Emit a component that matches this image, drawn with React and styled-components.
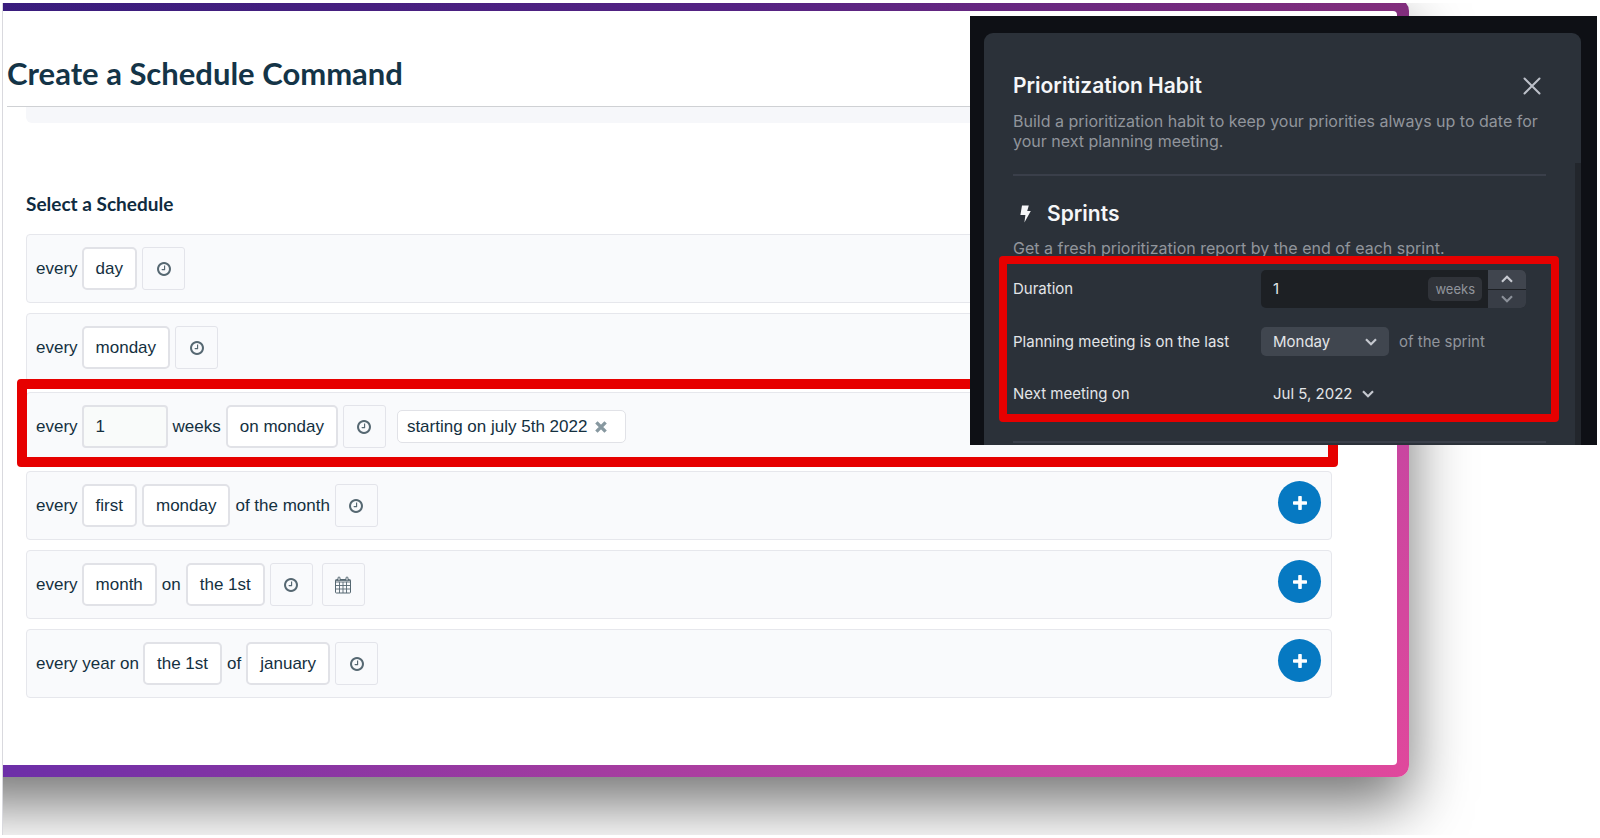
import React from "react";
import styled, { createGlobalStyle } from "styled-components";

const GlobalStyle = createGlobalStyle`
  * {
    box-sizing: border-box;
  }
  body {
    margin: 0;
    background: #ffffff;
  }
  h1, h2, h3, p {
    margin: 0;
  }
  button, input, select {
    font: inherit;
    color: inherit;
    margin: 0;
  }
  button {
    cursor: pointer;
  }
`;
const Stage = styled.div`
  position: relative;
  margin: 3px 3px 3px 2px;
  padding: 0 188px 58px 0;
  border-left: 1px solid #d9d9de;
  overflow: hidden;
`;
const Frame = styled.div`
  margin: -4px 0 0 -60px;
  padding: 12px;
  border-radius: 12px;
  background:
    linear-gradient(rgba(20, 0, 20, 0.25) 12px, transparent 50%),
    linear-gradient(135deg, #4526a0 3%, #6a2ea8 36%, #a03ba0 62%, #c946a0 85%, #e0489c);
  box-shadow: 0 27px 60px rgba(0, 0, 0, 0.55);
`;
const Page = styled.main`
  padding: 42px 0 67px 52px;
  border-radius: 4px;
  background: #ffffff;
  font-family: "Liberation Sans", Arial, sans-serif;
  font-size: 17px;
  line-height: 20px;
  color: #14303f;
`;
const Title = styled.h1`
  padding-bottom: 13px;
  border-bottom: 1px solid #cfd1d4;
  font-family: Lato, sans-serif;
  font-size: 31px;
  font-weight: 700;
  line-height: 40px;
  color: #143447;
`;
const Content = styled.div`
  padding: 0 65px 0 19px;
`;
const Strip = styled.div`
  height: 16px;
  border-radius: 0 0 6px 6px;
  background: #f6f7fa;
`;
const Subtitle = styled.h2`
  margin: 69px 0 18px;
  font-family: Lato, sans-serif;
  font-size: 19px;
  font-weight: 700;
  line-height: 24px;
  color: #0f2b40;
`;
const Rows = styled.div`
  display: flex;
  flex-direction: column;
  gap: 10px;
`;
const Row = styled.div`
  position: relative;
  display: flex;
  justify-content: space-between;
  align-items: flex-start;
  padding: 9px 10px 9px 9px;
  border: 1px solid #e6e7ec;
  border-radius: 4px;
  background: #f9fafc;
  &:after {
    content: "";
    display: ${(prop) => (prop.$marked ? "block" : "none")};
    position: absolute;
    inset: -14px -7px -7px -10px;
    border: 10px solid #e60000;
    border-radius: 4px;
    pointer-events: none;
  }
`;
const Parts = styled.div`
  display: flex;
  align-items: center;
  gap: 5px;
  padding: 3px 0;
  & > span:first-child {
    margin-right: -1px;
  }
`;
const Choice = styled.button`
  height: 43px;
  padding: 0 12px;
  border: 2px solid #e1e2e7;
  border-radius: 5px;
  background: #ffffff;
`;
const Count = styled.input`
  width: 86px;
  height: 43px;
  padding: 0 12px;
  border: 2px solid #e1e2e7;
  border-radius: 4px;
  background: #f9fbfa;
`;
const IconButton = styled.button`
  display: flex;
  align-items: center;
  justify-content: center;
  width: 43px;
  height: 43px;
  padding: 0;
  border: 1px solid #e3e4ea;
  border-radius: 3px;
  background: #f9fafc;
  color: #566872;
  & + & {
    margin-left: 4px;
  }
`;
const Tag = styled.span`
  display: flex;
  align-items: center;
  gap: 8px;
  height: 33px;
  margin-left: 6px;
  padding: 0 18px 0 9px;
  border: 1px solid #e1e2e7;
  border-radius: 5px;
  background: #ffffff;
`;
const Remove = styled.button`
  display: flex;
  padding: 0;
  border: 0;
  background: none;
  color: #8798a0;
`;
const Add = styled.button`
  display: flex;
  align-items: center;
  justify-content: center;
  width: 43px;
  height: 43px;
  padding: 0;
  border: 0;
  border-radius: 50%;
  background: #0679c2;
  color: #ffffff;
`;

const Backdrop = styled.aside`
  position: absolute;
  top: 13px;
  right: 0;
  width: 627px;
  height: 429px;
  padding: 17px 16px 0 14px;
  overflow: hidden;
  background: #0e1015;
  font-family: Inter, sans-serif;
  font-size: 15px;
  line-height: 20px;
  color: #e3e5e8;
`;
const Modal = styled.section`
  position: relative;
  height: 420px;
  padding: 39px 35px 0 29px;
  border-radius: 9px;
  background: #2b3139;
  &:after {
    content: "";
    position: absolute;
    top: 130px;
    right: 0;
    bottom: 0;
    width: 6px;
    background: #22262c;
  }
`;
const ModalHead = styled.div`
  display: flex;
  align-items: center;
  justify-content: space-between;
  padding-right: 5px;
`;
const ModalTitle = styled.h2`
  font-size: 21px;
  font-weight: 600;
  line-height: 28px;
  color: #f5f6f8;
`;
const Close = styled.button`
  display: flex;
  padding: 0;
  border: 0;
  background: none;
  color: #bcc0c9;
`;
const Muted = styled.p`
  color: #91959c;
`;
const Description = styled(Muted)`
  font-size: 16px;
`;
const Intro = styled(Description)`
  margin-top: 11px;
`;
const Divider = styled.hr`
  height: 2px;
  margin: 23px 0 0;
  border: 0;
  background: #3a3f4a;
`;
const SectionTitle = styled.h3`
  display: flex;
  align-items: center;
  gap: 16px;
  margin: 24px 0 10px;
  padding-left: 7px;
  font-size: 21px;
  font-weight: 600;
  line-height: 28px;
  color: #f5f6f8;
`;
const Settings = styled.div`
  position: relative;
  display: grid;
  grid-template-columns: 248px 1fr;
  grid-template-rows: 38px 29px 38px;
  row-gap: 19px;
  align-items: center;
  margin: 12px 0 28px;
  &:after {
    content: "";
    position: absolute;
    inset: -14px -13px -9px -14px;
    border: 8px solid #e60000;
    border-radius: 4px;
    pointer-events: none;
  }
`;
const Field = styled.div`
  display: flex;
  align-items: center;
  gap: 10px;
`;
const Stepper = styled.div`
  display: flex;
  width: 265px;
  height: 38px;
  border-radius: 5px;
  overflow: hidden;
  background: #1d2024;
`;
const Duration = styled.input`
  flex: 1;
  min-width: 0;
  padding: 0 12px;
  border: 0;
  background: none;
`;
const Unit = styled.span`
  align-self: center;
  margin-right: 6px;
  padding: 2px 7px;
  border-radius: 5px;
  background: #303339;
  font-size: 13px;
  color: #91959c;
`;
const Steps = styled.div`
  display: grid;
  gap: 1px;
  width: 38px;
`;
const Step = styled.button`
  display: flex;
  align-items: center;
  justify-content: center;
  padding: 0;
  border: 0;
  background: ${(prop) => (prop.$dim ? "#383d46" : "#40454e")};
  color: ${(prop) => (prop.$dim ? "#8a8f98" : "#c5c8cf")};
`;
const SelectBox = styled.div`
  display: grid;
  align-items: center;
  width: 128px;
  & > * {
    grid-area: 1 / 1;
  }
  & svg {
    justify-self: end;
    margin-right: 12px;
    color: #c5c8cf;
    pointer-events: none;
  }
`;
const Select = styled.select`
  appearance: none;
  height: 29px;
  padding: 0 12px;
  border: 0;
  border-radius: 5px;
  background: #40464f;
`;
const DateButton = styled.button`
  display: flex;
  align-items: center;
  gap: 10px;
  padding: 0 12px;
  border: 0;
  background: none;
  & svg {
    color: #c5c8cf;
  }
`;

const Clock = () => (
  <svg width="14" height="14" viewBox="0 128 1536 1536" fill="currentColor">
    <path d="M896 544v448q0 14-9 23t-23 9h-320q-14 0-23-9t-9-23v-64q0-14 9-23t23-9h224v-352q0-14 9-23t23-9h64q14 0 23 9t9 23zm416 352q0-148-73-273t-198-198-273-73-273 73-198 198-73 273 73 273 198 198 273 73 273-73 198-198 73-273zm224 0q0 209-103 385.5t-279.5 279.5-385.5 103-385.5-103-279.5-279.5-103-385.5 103-385.5 279.5-279.5 385.5-103 385.5 103 279.5 279.5 103 385.5z" />
  </svg>
);
const Calendar = () => (
  <svg width="18" height="18" viewBox="0 0 18 18" fill="none" stroke="currentColor">
    <rect x="1.5" y="3.5" width="15" height="13.5" rx="0.8" />
    <path d="M1.5 4.5h15M1.5 6h15M1.5 9.5h15M1.5 13h15M5.5 6v11M9 6v11M12.5 6v11" strokeWidth="0.9" />
    <rect x="4" y="1" width="2" height="4" rx="1" fill="#f9fafc" />
    <rect x="12" y="1" width="2" height="4" rx="1" fill="#f9fafc" />
  </svg>
);
const Cross = () => (
  <svg width="12" height="12" viewBox="0 0 12 12" stroke="currentColor" strokeWidth="3.4">
    <path d="M1.4 1.4l9.2 9.2M10.6 1.4l-9.2 9.2" />
  </svg>
);
const Plus = () => (
  <svg width="14" height="14" viewBox="0 0 14 14" fill="currentColor">
    <rect x="5.2" y="0" width="3.6" height="14" rx="0.8" />
    <rect x="0" y="5.2" width="14" height="3.6" rx="0.8" />
  </svg>
);
const CloseIcon = () => (
  <svg width="18" height="18" viewBox="0 0 18 18" stroke="currentColor" strokeWidth="2" strokeLinecap="round">
    <path d="M1.5 1.5l15 15M16.5 1.5l-15 15" />
  </svg>
);
const Bolt = () => (
  <svg width="11" height="18" viewBox="0 0 11 18" fill="currentColor">
    <path d="M2 0.5h6.8L7.2 6h3.6L4.4 17.5 5.4 10H0.4z" />
  </svg>
);
const Chevron = ({ up }) => (
  <svg width="12" height="8" viewBox="0 0 12 8" fill="none" stroke="currentColor" strokeWidth="2.2">
    <path d={up ? "M1 6.8l5-5 5 5" : "M1 1.2l5 5 5-5"} />
  </svg>
);

const schedules = [
  ["every", { pick: "day" }, { icon: "clock" }],
  ["every", { pick: "monday" }, { icon: "clock" }],
  [
    "every",
    { count: 1 },
    "weeks",
    { pick: "on monday" },
    { icon: "clock" },
    { tag: "starting on july 5th 2022" },
  ],
  ["every", { pick: "first" }, { pick: "monday" }, "of the month", { icon: "clock" }],
  ["every", { pick: "month" }, "on", { pick: "the 1st" }, { icon: "clock" }, { icon: "calendar" }],
  ["every year on", { pick: "the 1st" }, "of", { pick: "january" }, { icon: "clock" }],
];

const Part = ({ part }) => {
  if (typeof part === "string") return <span>{part}</span>;
  if (part.pick) return <Choice type="button">{part.pick}</Choice>;
  if (part.count) return <Count aria-label="number of weeks" defaultValue={part.count} />;
  if (part.tag) {
    return (
      <Tag>
        {part.tag}
        <Remove type="button" aria-label="Remove start date">
          <Cross />
        </Remove>
      </Tag>
    );
  }
  return (
    <IconButton type="button" aria-label={part.icon === "clock" ? "Set time" : "Set date"}>
      {part.icon === "clock" ? <Clock /> : <Calendar />}
    </IconButton>
  );
};

const PrioritizationHabit = () => {
  return (
    <Backdrop>
      <Modal>
        <ModalHead>
          <ModalTitle>Prioritization Habit</ModalTitle>
          <Close type="button" aria-label="Close">
            <CloseIcon />
          </Close>
        </ModalHead>
        <Intro>
          Build a prioritization habit to keep your priorities always up to date for your next
          planning meeting.
        </Intro>
        <Divider />
        <SectionTitle>
          <Bolt />
          Sprints
        </SectionTitle>
        <Description>Get a fresh prioritization report by the end of each sprint.</Description>
        <Settings>
          <label htmlFor="duration">Duration</label>
          <Stepper>
            <Duration id="duration" defaultValue="1" />
            <Unit>weeks</Unit>
            <Steps>
              <Step type="button" aria-label="Increase">
                <Chevron up />
              </Step>
              <Step type="button" aria-label="Decrease" $dim>
                <Chevron />
              </Step>
            </Steps>
          </Stepper>
          <label htmlFor="weekday">Planning meeting is on the last</label>
          <Field>
            <SelectBox>
              <Select id="weekday" defaultValue="Monday">
                <option>Monday</option>
                <option>Tuesday</option>
                <option>Wednesday</option>
                <option>Thursday</option>
                <option>Friday</option>
              </Select>
              <Chevron />
            </SelectBox>
            <Muted>of the sprint</Muted>
          </Field>
          <label htmlFor="next">Next meeting on</label>
          <DateButton id="next" type="button">
            Jul 5, 2022
            <Chevron />
          </DateButton>
        </Settings>
        <Divider />
      </Modal>
    </Backdrop>
  );
};

export default function App() {
  return (
    <>
      <GlobalStyle />
      <Stage>
        <Frame>
          <Page>
            <Title>Create a Schedule Command</Title>
            <Content>
              <Strip />
              <Subtitle>Select a Schedule</Subtitle>
              <Rows>
                {schedules.map((parts, i) => {
                  return (
                    <Row key={i} $marked={i === 2}>
                      <Parts>
                        {parts.map((part, j) => (
                          <Part key={j} part={part} />
                        ))}
                      </Parts>
                      <Add type="button" aria-label="Add schedule">
                        <Plus />
                      </Add>
                    </Row>
                  );
                })}
              </Rows>
            </Content>
          </Page>
        </Frame>
        <PrioritizationHabit />
      </Stage>
    </>
  );
}
